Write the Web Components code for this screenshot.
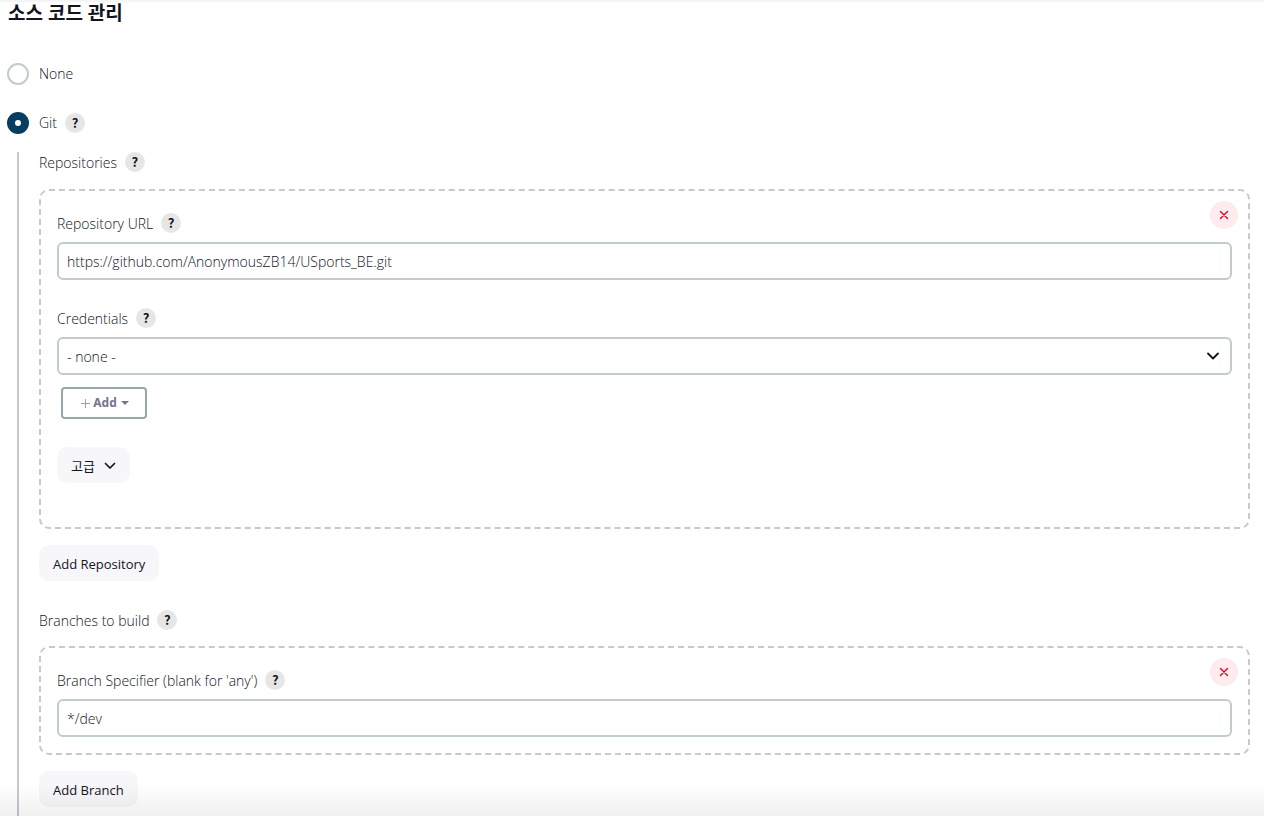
<!DOCTYPE html>
<html lang="ko">
<head>
<meta charset="utf-8">
<meta name="viewport" content="width=device-width, initial-scale=1">
<title>소스 코드 관리</title>
<style>
  :root {
    --line: #c1cbd0;
    --text: #14141f;
    --muted-bg: #f7f7fa;
    --accent: #073d5f;
  }
  body {
    margin: 0;
    background: #fff;
    color: var(--text);
    font: 300 14px/20px "Open Sans", "Noto Sans CJK KR", sans-serif;
  }
</style>
</head>
<body>
<scm-section heading="소스 코드 관리">
  <field-title>Repositories</field-title>
  <repeat-card class="tall">
    <text-field label="Repository URL" value="https://github.com/AnonymousZB14/USports_BE.git"></text-field>
    <credentials-field label="Credentials"></credentials-field>
    <soft-button chevron>고급</soft-button>
  </repeat-card>
  <soft-button>Add Repository</soft-button>
  <field-title class="next">Branches to build</field-title>
  <repeat-card>
    <text-field label="Branch Specifier (blank for 'any')" value="*/dev"></text-field>
  </repeat-card>
  <soft-button>Add Branch</soft-button>
</scm-section>

<script>
class BaseElement extends HTMLElement {
  render(html) {
    this.attachShadow({ mode: "open" }).innerHTML = html;
  }
}

customElements.define("help-button", class extends BaseElement {
  connectedCallback() {
    if (this.shadowRoot) return;
    this.render(`
      <style>
        :host { display: inline-flex; }
        button {
          width: 20px; height: 20px; padding: 0; border: 0; border-radius: 50%;
          background: #e6e6e6; color: #14141f; cursor: pointer;
          font: 700 13px/20px "Noto Sans CJK KR", sans-serif;
        }
      </style>
      <button type="button" aria-label="Help">?</button>`);
  }
});

customElements.define("field-title", class extends BaseElement {
  connectedCallback() {
    if (this.shadowRoot) return;
    this.render(`
      <style>
        :host { display: flex; align-items: center; gap: 8px; height: 20px; margin-bottom: 17px; }
        :host(.next) { margin: 29px 0 16px; }
        span { padding-top: 2px; }
      </style>
      <span><slot></slot></span><help-button></help-button>`);
  }
});

customElements.define("soft-button", class extends BaseElement {
  connectedCallback() {
    if (this.shadowRoot) return;
    const icon = this.hasAttribute("chevron")
      ? `<svg width="12" height="8" viewBox="0 0 12 8" aria-hidden="true"><path d="M1.5 1.5 6 6l4.500-4.500" fill="none" stroke="currentColor" stroke-width="1.700" stroke-linecap="round" stroke-linejoin="round"/></svg>` : "";
    this.render(`
      <style>
        :host { display: flex; }
        button {
          display: flex; align-items: center; gap: 9px; height: 36px; padding: 1px 14px 0;
          border: 0; border-radius: 10px; background: var(--muted-bg); color: var(--text);
          font: inherit; font-size: 13px; font-weight: 400; cursor: pointer;
        }
      </style>
      <button type="button"><slot></slot>${icon}</button>`);
  }
});

customElements.define("repeat-card", class extends BaseElement {
  connectedCallback() {
    if (this.shadowRoot) return;
    this.render(`
      <style>
        :host {
          display: flex; flex-direction: column; gap: 28px; position: relative;
          padding: 22px 16px 16px; margin-bottom: 16px;
          border: 2px dashed var(--line); border-radius: 10px;
        }
        :host(.tall) { padding-bottom: 44px; }
        .remove {
          position: absolute; top: 10px; right: 10px;
          display: grid; place-items: center; width: 28px; height: 28px; padding: 0;
          border: 0; border-radius: 50%; background: #fdebee; color: #e6001f; cursor: pointer;
        }
      </style>
      <slot></slot>
      <button class="remove" type="button" aria-label="Delete">
        <svg width="10" height="10" viewBox="0 0 10 10" aria-hidden="true"><path d="m1.500 1.500 7 7m0-7-7 7" fill="none" stroke="currentColor" stroke-width="1.400" stroke-linecap="round"/></svg>
      </button>`);
  }
});

const fieldStyles = `
  :host { display: flex; flex-direction: column; }
  .title { display: flex; align-items: center; gap: 8px; height: 20px; margin-bottom: 9px; }
  .title label { padding-top: 2px; }
  input, select {
    box-sizing: border-box; width: 100%; height: 38px; padding: 0 8px; margin: 0;
    border: 2px solid var(--line); border-radius: 6px; outline: 0;
    background: #fff; color: var(--text); font: inherit;
  }`;

customElements.define("text-field", class extends BaseElement {
  connectedCallback() {
    if (this.shadowRoot) return;
    this.render(`
      <style>${fieldStyles}</style>
      <div class="title"><label for="field"></label><help-button></help-button></div>
      <input id="field" type="text" spellcheck="false">`);
    this.shadowRoot.querySelector("label").textContent = this.getAttribute("label");
    this.shadowRoot.querySelector("input").value = this.getAttribute("value");
  }
});

customElements.define("credentials-field", class extends BaseElement {
  connectedCallback() {
    if (this.shadowRoot) return;
    this.render(`
      <style>${fieldStyles}
        .select { display: grid; align-items: center; }
        .select > * { grid-area: 1 / 1; }
        select { appearance: none; padding: 2px 32px 0 8px; }
        .select svg { justify-self: end; margin-right: 12px; pointer-events: none; z-index: 1; }
        .add {
          display: flex; align-items: center; justify-content: center; gap: 4px; align-self: flex-start;
          box-sizing: border-box; width: 86px; height: 32px; margin: 12px 4px 0; padding: 0 0 0 2px;
          border: 2px solid #98a6ad; border-radius: 4px; background: #fff; color: #77738f;
          font: 700 12px/20px "Noto Sans", sans-serif; cursor: pointer;
        }
        .add svg:first-child { margin-right: -1px; }
      </style>
      <div class="title"><label for="credentials">${this.getAttribute("label")}</label><help-button></help-button></div>
      <div class="select">
        <select id="credentials"><option>- none -</option></select>
        <svg width="14" height="10" viewBox="0 0 14 10" aria-hidden="true"><path d="m2 2.500 5 5 5-5" fill="none" stroke="#14141f" stroke-width="1.800" stroke-linecap="round" stroke-linejoin="round"/></svg>
      </div>
      <button class="add" type="button">
        <svg width="9" height="9" viewBox="0 0 9 9" aria-hidden="true"><path d="M4.500 0v9M0 4.500h9" stroke="#a19eb2" stroke-width="1"/></svg>
        Add
        <svg width="8" height="4" viewBox="0 0 8 4" aria-hidden="true"><path d="M0 0h8L4 4z" fill="currentColor"/></svg>
      </button>`);
  }
});

customElements.define("scm-section", class extends BaseElement {
  connectedCallback() {
    if (this.shadowRoot) return;
    this.render(`
      <style>
        :host {
          display: flex; flex-direction: column; box-sizing: border-box; min-height: 100vh;
          border-top: 2px solid #f5f5f5; padding: 0 14px 0 7px;
        }
        h2 { margin: 0 0 39px 1px; font-size: 19px; line-height: 22px; font-weight: 700; color: #14141f; }
        .choice { display: flex; align-items: center; height: 22px; margin-bottom: 27px; }
        .choice.git { margin-bottom: 18px; }
        .choice label { display: flex; align-items: center; gap: 10px; margin-right: 8px; }
        input {
          appearance: none; box-sizing: border-box; width: 22px; height: 22px; margin: 0;
          border: 2px solid var(--line); border-radius: 50%; background: #fff;
        }
        input:checked { border: 8px solid var(--accent); }
        .body {
          flex: 1; margin-left: 10px; padding: 0 0 9px 20px; border-left: 2px solid var(--line);
        }
        .fade {
          position: fixed; inset: auto 0 0; height: 32px; pointer-events: none;
          background: linear-gradient(to bottom, transparent, rgba(0, 0, 0, .06));
        }
      </style>
      <h2>${this.getAttribute("heading")}</h2>
      <div class="choice"><label><input type="radio" name="scm" value="none">None</label></div>
      <div class="choice git"><label><input type="radio" name="scm" value="git" checked>Git</label><help-button></help-button></div>
      <div class="body"><slot></slot></div>
      <div class="fade"></div>`);
  }
});
</script>
</body>
</html>
